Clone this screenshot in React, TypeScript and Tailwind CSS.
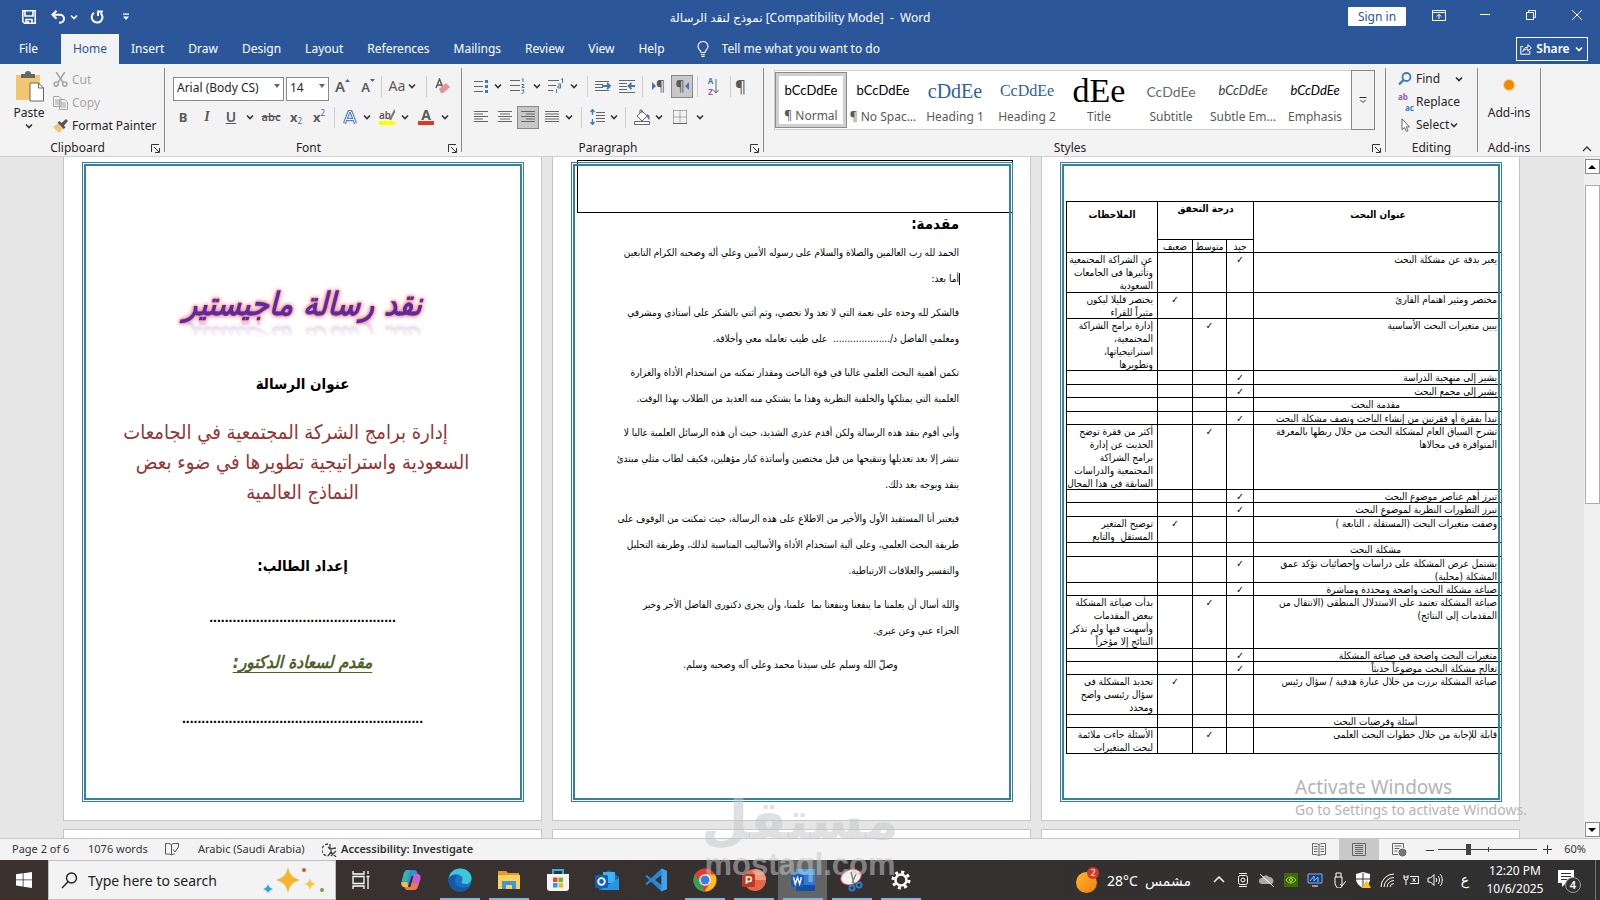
import type { ReactNode } from "react";

const docFont = "font-['DejaVu_Sans_Condensed','DejaVu_Sans',sans-serif]";

function Chevron({ className = "text-[#333]" }: { className?: string }) {
    return (
        <svg viewBox="0 0 10 10" className={`w-[10px] h-[10px] shrink-0 ${className}`} fill="none" stroke="currentColor" strokeWidth="1.6">
            <path d="M2 3.5l3 3 3-3" />
        </svg>
    );
}

function Divider({ className = "mx-[5px]" }: { className?: string }) {
    return <div className={`w-px h-[21px] shrink-0 bg-[#d2d0ce] ${className}`} />;
}

function Tool({ label, className = "w-6", active = false, children }: { label: string; className?: string; active?: boolean; children: ReactNode }) {
    return (
        <button
            aria-label={label}
            className={`h-[23px] shrink-0 flex items-center justify-center text-[#5a5a5a] ${active ? "bg-[#c8c8c8] border border-[#8a8a8a]" : ""} ${className}`}
        >
            {children}
        </button>
    );
}

function Group({ title, className = "", launcher = false, children }: { title: string; className?: string; launcher?: boolean; children: ReactNode }) {
    return (
        <>
            <section className={`flex flex-col ${className}`}>
                <div className="flex-1">{children}</div>
                <div className="h-4 flex items-center px-1">
                    <span className="flex-1 text-center text-xs leading-4">{title}</span>
                    {launcher && (
                        <button aria-label={`${title} settings`} className="w-[9px] h-[9px]">
                            <svg viewBox="0 0 9 9" className="w-[9px] h-[9px]" fill="none" stroke="#333">
                                <path d="M.5 8V.5H8M3 3l5 5M8.5 4v4.500H4" />
                            </svg>
                        </button>
                    )}
                </div>
            </section>
            <div className="w-px my-1 shrink-0 bg-[#8a8a8a]" />
        </>
    );
}

function Lines({ rows }: { rows: [number, number][] }) {
    return (
        <svg viewBox="0 0 14 14" className="w-[14px] h-[14px]" stroke="#666" strokeWidth="1">
            {rows.map(([from, to], i) => (
                <path key={i} d={`M${from} ${i * 2.5 + 1.5}H${to}`} />
            ))}
        </svg>
    );
}

const tabs = ["Insert", "Draw", "Design", "Layout", "References", "Mailings", "Review", "View", "Help"];

function TitleBar() {
    return (
        <header className="bg-[#2b579a] text-white">
            <div className="h-[34px] grid grid-cols-[1fr_auto_1fr] items-center">
                <div className="flex items-center pl-[22px]">
                    <button aria-label="Save">
                        <svg viewBox="0 0 14 14" className="w-[14px] h-[14px]" fill="none" stroke="white" strokeWidth="1.6">
                            <path d="M.8.8h12.400v12.400H2.500L.8 11.500zM3 1v5h8V1M4 13V9.500h6V13" />
                            <path d="M5 11h2v2H5z" fill="white" stroke="none" />
                        </svg>
                    </button>
                    <button aria-label="Undo" className="ml-[15px]">
                        <svg viewBox="0 0 15 14" className="w-[15px] h-[14px]" fill="none" stroke="white" strokeWidth="2">
                            <path d="M5.500.8L1.500 4.800l4 4M2 4.800h7a4 4 0 0 1 0 8H8" />
                        </svg>
                    </button>
                    <Chevron className="ml-[3px] text-white" />
                    <button aria-label="Repeat" className="ml-[11px]">
                        <svg viewBox="0 0 14 14" className="w-[14px] h-[14px]" fill="none" stroke="white" strokeWidth="2">
                            <path d="M4 2.800A5.400 5.400 0 1 0 10.500 3M8 6V1.500h5" />
                        </svg>
                    </button>
                    <button aria-label="Customize Quick Access Toolbar" className="ml-[18px]">
                        <svg viewBox="0 0 8 8" className="w-2 h-2" fill="white">
                            <path d="M1 .5h6v1.200H1zM1 3.500h6L4 7z" />
                        </svg>
                    </button>
                </div>
                <h1 className="text-xs whitespace-pre pt-[2px]">نموذج لنقد الرسالة [Compatibility Mode]  -  Word</h1>
                <div className="flex items-center justify-end pr-[18px] pb-1">
                    <button className="w-[58px] h-[19px] mr-[26px] mt-[3px] bg-white text-[#2b579a] text-xs leading-4 rounded-[1px]">Sign in</button>
                    <button aria-label="Ribbon Display Options" className="mr-[34px]">
                        <svg viewBox="0 0 14 11" className="w-[14px] h-[11px]" fill="none" stroke="white">
                            <path d="M.5.5h13v10H.5zM.5 2.500h13M7 9V4.500M4.800 6.500L7 4.300l2.200 2.200" />
                        </svg>
                    </button>
                    <button aria-label="Minimize" className="mr-9">
                        <svg viewBox="0 0 10 10" className="w-[10px] h-[10px]" stroke="white"><path d="M0 4.500h10" /></svg>
                    </button>
                    <button aria-label="Restore" className="mr-9">
                        <svg viewBox="0 0 10 10" className="w-[10px] h-[10px]" fill="none" stroke="white">
                            <path d="M.5 2.500h7v7h-7zM2.500 2.500v-2h7v7h-2" />
                        </svg>
                    </button>
                    <button aria-label="Close">
                        <svg viewBox="0 0 10 10" className="w-[10px] h-[10px]" stroke="white"><path d="M0 0l10 10M10 0L0 10" /></svg>
                    </button>
                </div>
            </div>
            <nav className="h-[30px] flex items-center text-xs pr-3">
                <button className="w-[61px] pr-1">File</button>
                <button className="w-[58px] h-[30px] bg-[#f3f3f3] text-[#2b579a]">Home</button>
                {tabs.map((tab) => (
                    <button key={tab} className="px-3">{tab}</button>
                ))}
                <svg viewBox="0 0 12 16" className="w-3 h-4 ml-5" fill="none" stroke="white" strokeWidth="1.100">
                    <path d="M4 11.500C4 9 1 8.500 1 5.500a5 5 0 0 1 10 0C11 8.500 8 9 8 11.500zM4 13.500h4M4.500 15.400h3" />
                </svg>
                <input aria-label="Tell me what you want to do" placeholder="Tell me what you want to do" className="ml-[13px] w-48 bg-transparent outline-none placeholder:text-white" />
                <button className="ml-auto w-[72px] h-6 border border-white flex items-center justify-center gap-1 font-semibold">
                    <svg viewBox="0 0 12 12" className="w-3 h-3" fill="none" stroke="white">
                        <path d="M3 3.500H.8v7.700h9V8M3 8.500c.3-3 2-4.300 5-4.300V1.500L11.300 5 8 8.300V6C5.500 6 4 6.500 3 8.500z" />
                    </svg>
                    Share
                    <Chevron className="text-white" />
                </button>
            </nav>
        </header>
    );
}

function ClipboardGroup() {
    return (
        <Group title="Clipboard" className="w-[164px]" launcher>
            <div className="flex pt-1">
                <button className="w-[52px] ml-[3px] flex flex-col items-center text-xs">
                    <svg viewBox="0 0 29 31" className="w-[29px] h-[31px] mt-[3px]">
                        <path d="M1 4h24v25H1z" fill="#f2c671" />
                        <path d="M6 3h4a3 3 0 0 1 6 0h4v4H6z" fill="#666" />
                        <path d="M15 12h8.500l5 5v13H15z" fill="white" stroke="#666" />
                        <path d="M23.500 12v5h5" fill="none" stroke="#666" />
                    </svg>
                    <span className="leading-4 mt-[3px]">Paste</span>
                    <Chevron />
                </button>
                <div className="flex flex-col text-xs text-[#a6a6a6] -ml-[2px]">
                    <button className="h-[23px] flex items-center gap-1">
                        <svg viewBox="0 0 14 14" className="w-[15px] h-[15px]" fill="none" stroke="#a6a6a6" strokeWidth="1.500">
                            <path d="M3 0l6.500 10M11 0L4.500 10" />
                            <circle cx="3" cy="11.300" r="2" />
                            <circle cx="11" cy="11.300" r="2" />
                        </svg>
                        Cut
                    </button>
                    <button className="h-[23px] flex items-center gap-1">
                        <svg viewBox="0 0 15 14" className="w-[15px] h-[14px]" fill="#f3f3f3" stroke="#a6a6a6">
                            <path d="M.5.5H6l2 2v8H.5zM2 4h4M2 6h4M2 8h4M6.500 3.500H12l2.500 2.500v7.500h-8zM8 7h5M8 9h5M8 11h5" />
                        </svg>
                        Copy
                    </button>
                    <button className="h-[23px] flex items-center gap-1 text-[#262626]">
                        <svg viewBox="0 0 15 14" className="w-[15px] h-[14px]">
                            <path d="M0 8l5-4 5 6-4 4z" fill="#f2c671" />
                            <path d="M4.500 3.500l2-1.500 2 2L13 0l2 2-4 4.500 1.500 2L10.500 10z" fill="#555" />
                        </svg>
                        Format Painter
                    </button>
                </div>
            </div>
        </Group>
    );
}

function Combo({ label, value, className }: { label: string; value: string; className: string }) {
    return (
        <div className={`relative h-6 ${className}`}>
            <select aria-label={label} className="appearance-none w-full h-6 pl-[3px] pb-[2px] text-xs bg-white border border-[#8a8a8a] text-[#262626]">
                <option>{value}</option>
            </select>
            <svg viewBox="0 0 6 4" className="absolute right-1 top-[10px] w-[6px] h-1" fill="#666"><path d="M0 0h6L3 4z" /></svg>
        </div>
    );
}

function FontGroup() {
    return (
        <Group title="Font" className="w-[296px]" launcher>
            <div className="flex flex-col gap-[7px] pt-[10px]">
                <div className="h-6 flex items-center pl-2">
                    <Combo label="Font" value="Arial (Body CS)" className="w-[111px]" />
                    <Combo label="Font size" value="14" className="w-[43px] ml-[2px]" />
                    <Tool label="Increase Font Size" className="w-[27px]">
                        <span className="font-semibold text-[15px]">A</span>
                        <svg viewBox="0 0 5 3" className="w-[5px] h-[3px] mb-3" fill="#2b6cb8"><path d="M0 3h5L2.500 0z" /></svg>
                    </Tool>
                    <Tool label="Decrease Font Size">
                        <span className="font-semibold text-[13px] mt-1">A</span>
                        <svg viewBox="0 0 5 3" className="w-[5px] h-[3px] mb-3" fill="#2b6cb8"><path d="M0 0h5L2.500 3z" /></svg>
                    </Tool>
                    <Divider className="ml-px mr-[5px]" />
                    <Tool label="Change Case" className="w-[20px] text-sm">Aa</Tool>
                    <Chevron />
                    <Divider className="ml-[9px] mr-1" />
                    <Tool label="Clear All Formatting">
                        <svg viewBox="0 0 16 16" className="w-4 h-4">
                            <path d="M1 10L4.500 1 8 10M2 7h5" fill="none" stroke="#555" strokeWidth="1.400" />
                            <path d="M4 11l7-6 4 4-7 6H6z" fill="#e8919a" />
                        </svg>
                    </Tool>
                </div>
                <div className="h-6 flex items-center pl-[6px] text-sm">
                    <Tool label="Bold"><b className="text-[13px]">B</b></Tool>
                    <Tool label="Italic"><i className="font-['Liberation_Serif',serif] font-bold">I</i></Tool>
                    <Tool label="Underline"><span className="underline font-semibold">U</span></Tool>
                    <Chevron className="mx-[2px] text-[#333]" />
                    <Tool label="Strikethrough" className="w-7"><s className="text-[11px] font-semibold">abc</s></Tool>
                    <Tool label="Subscript" className="w-[22px]">
                        <b className="text-[13px]">x</b><span className="text-[8px] text-[#2b6cb8] mt-2">2</span>
                    </Tool>
                    <Tool label="Superscript">
                        <b className="text-[13px]">x</b><span className="text-[8px] text-[#2b6cb8] mb-2">2</span>
                    </Tool>
                    <Divider className="mx-[3px]" />
                    <Tool label="Text Effects">
                        <svg viewBox="0 0 14 15" className="w-[14px] h-[15px]" fill="none">
                            <path d="M1.500 13.500L6 1.500h2l4.500 12M3.500 9.500h7" stroke="#a9c4e8" strokeWidth="4" />
                            <path d="M1.500 13.500L6 1.500h2l4.500 12M3.500 9.500h7" stroke="#3e6db5" strokeWidth="2.400" />
                            <path d="M1.500 13.500L6 1.500h2l4.500 12M3.500 9.500h7" stroke="#fff" strokeWidth="1" />
                        </svg>
                    </Tool>
                    <Chevron />
                    <Tool label="Text Highlight Color" className="w-[30px]">
                        <span className="flex flex-col items-center w-4">
                            <span className="flex text-[10px] leading-[12px] font-semibold">
                                ab
                                <svg viewBox="0 0 6 12" className="w-[6px] h-3 -ml-[2px]" stroke="#777" strokeWidth="2"><path d="M6 1L1 11" /></svg>
                            </span>
                            <span className="w-4 h-1 bg-[#ffff00]" />
                        </span>
                    </Tool>
                    <Chevron className="-ml-[2px] mr-[2px] text-[#333]" />
                    <Tool label="Font Color" className="w-[28px]">
                        <span className="flex flex-col items-center w-4">
                            <span className="text-[14px] leading-[12px] font-bold">A</span>
                            <span className="w-4 h-1 bg-[#d83b22]" />
                        </span>
                    </Tool>
                    <Chevron />
                </div>
            </div>
        </Group>
    );
}

const full: [number, number][] = [[0, 14], [0, 14], [0, 14], [0, 14], [0, 14]];

function ParagraphGroup() {
    return (
        <Group title="Paragraph" className="w-[301px]" launcher>
            <div className="flex flex-col gap-[7px] pt-[10px]">
                <div className="h-6 flex items-center pl-[7px]">
                    <Tool label="Bullets">
                        <svg viewBox="0 0 14 15" className="w-[14px] h-[15px]" stroke="#666">
                            <path d="M0 2.500h9M0 7.500h9M0 12.500h9" />
                            <path d="M11 1h3v3h-3zM11 6h3v3h-3zM11 11h3v3h-3z" fill="#3e78bd" stroke="none" />
                        </svg>
                    </Tool>
                    <Chevron />
                    <Tool label="Numbering" className="w-[29px]">
                        <svg viewBox="0 0 15 16" className="w-[15px] h-4" stroke="#666" fill="none">
                            <path d="M0 2.500h10M0 7.500h10M0 12.500h10" />
                            <path d="M12 1.500l1-1V4M11.500 6.500H14L12 9.500h2.500M11.500 12h2.500l-1 1.500c2 0 1 2-1.500 2" stroke="#3e78bd" />
                        </svg>
                    </Tool>
                    <Chevron />
                    <Tool label="Multilevel List" className="w-[27px]">
                        <svg viewBox="0 0 16 16" className="w-4 h-4" stroke="#666" fill="none">
                            <path d="M0 2.500h11M0 7.500h8M0 12.500h5" />
                            <path d="M13 1.500l1.500-1V5M10 6h2.500v4H10V8h2.500M8.500 11v4" stroke="#3e78bd" />
                        </svg>
                    </Tool>
                    <Chevron />
                    <Divider className="ml-[8px] mr-[3px]" />
                    <Tool label="Decrease Indent" className="w-6">
                        <svg viewBox="0 0 16 13" className="w-4 h-[13px]" stroke="#666" fill="none">
                            <path d="M0 1.500h14M0 4.500h8M0 7.500h8M0 10.500h14" />
                            <path d="M7 6h8M12 3l3 3-3 3" stroke="#3e78bd" strokeWidth="1.800" />
                        </svg>
                    </Tool>
                    <Tool label="Increase Indent" className="w-6">
                        <svg viewBox="0 0 16 13" className="w-4 h-[13px]" stroke="#666" fill="none">
                            <path d="M0 .5h16M0 3.500h8M0 6.500h8M0 9.500h8M0 12.500h16" />
                            <path d="M16 6h-6M12.500 3l-3 3 3 3" stroke="#3e78bd" strokeWidth="1.800" />
                        </svg>
                    </Tool>
                    <Divider className="ml-[3px] mr-[3px]" />
                    <Tool label="Left-to-Right" className="w-[25px] text-sm">
                        <svg viewBox="0 0 4 8" className="w-1 h-2" fill="#3e78bd"><path d="M0 0v8l4-4z" /></svg>¶
                    </Tool>
                    <Tool label="Right-to-Left" className="w-[22px] text-sm" active>
                        ¶<svg viewBox="0 0 4 8" className="w-1 h-2" fill="#3e78bd"><path d="M4 0v8L0 4z" /></svg>
                    </Tool>
                    <Divider className="ml-1 mr-1" />
                    <Tool label="Sort" className="w-[23px]">
                        <span className="flex flex-col text-[8px] leading-[11px] font-bold">
                            <span className="text-[#3e78bd]">A</span>
                            <span className="text-[#9a5aa8]">Z</span>
                        </span>
                        <svg viewBox="0 0 6 15" className="w-[6px] h-[15px]" stroke="#666" fill="none"><path d="M3 0v14M.5 11L3 14l2.500-3" /></svg>
                    </Tool>
                    <Divider className="ml-[5px] mr-1" />
                    <Tool label="Show/Hide" className="text-[17px]">¶</Tool>
                </div>
                <div className="h-6 flex items-center pl-[7px]">
                    <Tool label="Align Left"><Lines rows={[[0, 14], [0, 9], [0, 14], [0, 9], [0, 14]]} /></Tool>
                    <Tool label="Center"><Lines rows={[[0, 14], [2, 12], [0, 14], [2, 12], [0, 14]]} /></Tool>
                    <Tool label="Align Right" className="w-[22px]" active><Lines rows={[[0, 14], [5, 14], [0, 14], [5, 14], [0, 14]]} /></Tool>
                    <Tool label="Justify" className="w-[25px]"><Lines rows={full} /></Tool>
                    <Chevron />
                    <Divider className="ml-[7px] mr-[3px]" />
                    <Tool label="Line Spacing" className="w-[24px]">
                        <svg viewBox="0 0 15 16" className="w-[15px] h-4" stroke="#666" fill="none">
                            <path d="M6 3.500h9M6 6.500h9M6 9.500h9M6 12.500h9" />
                            <path d="M2.500 1v5M.5 3l2-2.500 2 2.500M2.500 10v5M.5 13l2 2.500 2-2.500" stroke="#3e78bd" strokeWidth="1.300" />
                        </svg>
                    </Tool>
                    <Chevron />
                    <Divider className="ml-[6px] mr-[4px]" />
                    <Tool label="Shading">
                        <svg viewBox="0 0 17 16" className="w-[17px] h-4" stroke="#666" fill="none">
                            <path d="M3 7l5-5 5 5-5 5zM6 4V1h2v3" fill="white" />
                            <path d="M13 5c3 1 2.500 3 2.500 6-1.500-1-2-2-2.500-4" fill="#3e78bd" stroke="none" />
                            <path d="M.5 12.500h15v3H.5z" fill="white" />
                        </svg>
                    </Tool>
                    <Chevron />
                    <Tool label="Borders" className="w-[31px]">
                        <svg viewBox="0 0 14 14" className="w-[14px] h-[14px]" stroke="#666" fill="none">
                            <path d="M.5.5h13M.5.5v13M13.500.5v13M7 .5v13M.5 7h13" strokeDasharray="1 1" />
                            <path d="M0 13.500h14" />
                        </svg>
                    </Tool>
                    <Chevron />
                </div>
            </div>
        </Group>
    );
}

const styles = [
    { name: "¶ Normal", sample: "bCcDdEe", look: "text-[13px] text-black" },
    { name: "¶ No Spac...", sample: "bCcDdEe", look: "text-[13px] text-black" },
    { name: "Heading 1", sample: "cDdEe", look: "text-[20px] text-[#2f5f9e] font-['Liberation_Serif',serif]" },
    { name: "Heading 2", sample: "CcDdEe", look: "text-[16px] text-[#2f5f9e] font-['Liberation_Serif',serif]" },
    { name: "Title", sample: "dEe", look: "text-[34px] leading-[30px] text-black font-['Liberation_Serif',serif]" },
    { name: "Subtitle", sample: "CcDdEe", look: "text-[14px] text-[#6a6a6a]" },
    { name: "Subtle Em...", sample: "bCcDdEe", look: "text-[13px] text-[#404040] italic" },
    { name: "Emphasis", sample: "bCcDdEe", look: "text-[13px] text-black italic" },
];

function StylesGroup() {
    return (
        <Group title="Styles" className="flex-1 min-w-0" launcher>
            <div className="mt-[6px] ml-[10px] mr-[10px] h-[60px] flex bg-white border border-[#d2d0ce]">
                <div className="flex-1 flex min-w-0 overflow-hidden">
                    {styles.map((s, i) => (
                        <button
                            key={s.name}
                            className={`w-[72px] shrink-0 flex flex-col items-center text-[#5a5a5a] ${i === 0 ? "my-px h-[56px] outline outline-[#8a8a8a] -outline-offset-1 border-4 border-[#d0d0d0]" : "pt-[5px]"}`}
                        >
                            <span className={`h-[30px] w-[54px] flex items-center justify-center font-['Lato',sans-serif] ${s.look}`}>{s.sample}</span>
                            <span className="text-xs leading-4 whitespace-nowrap mt-[3px]">{s.name}</span>
                        </button>
                    ))}
                </div>
                <button aria-label="More styles" className="w-6 -my-px -mr-px border border-[#8a8a8a] bg-[#f3f3f3] flex items-center justify-center">
                    <svg viewBox="0 0 8 8" className="w-2 h-2" fill="none" stroke="#333"><path d="M.5 1.500h7M1.500 4L4 6.500 6.500 4" /></svg>
                </button>
            </div>
        </Group>
    );
}

function Ribbon() {
    return (
        <div className="h-[93px] shrink-0 bg-[#f3f3f3] border-b border-[#d0d0d0] flex text-[#262626]">
            <ClipboardGroup />
            <FontGroup />
            <ParagraphGroup />
            <StylesGroup />
            <Group title="Editing" className="w-[91px]">
                <div className="flex flex-col pt-[3px] pl-3 text-xs">
                    <button className="h-[23px] flex items-center gap-1">
                        <svg viewBox="0 0 14 14" className="w-[14px] h-[14px]" fill="none" stroke="#3e78bd" strokeWidth="1.800">
                            <circle cx="8.500" cy="5" r="4" />
                            <path d="M5.500 8L1 12.500" strokeWidth="2.400" />
                        </svg>
                        Find
                        <Chevron className="ml-[10px]" />
                    </button>
                    <button className="h-[23px] flex items-center gap-[2px]">
                        <span className="w-4 flex flex-col text-[8px] leading-[11px] font-bold">
                            <span className="text-left text-[#9a5aa8]">ab</span>
                            <span className="text-right text-[#3e78bd]">ac</span>
                        </span>
                        Replace
                    </button>
                    <button className="h-[23px] flex items-center gap-1">
                        <svg viewBox="0 0 14 14" className="w-[14px] h-[14px]" fill="white" stroke="#666">
                            <path d="M4 .8v11l2.500-2.300 1.800 4 1.700-.8-1.800-3.800H11.500z" />
                        </svg>
                        <span className="flex items-center">Select<Chevron /></span>
                    </button>
                </div>
            </Group>
            <Group title="Add-ins" className="w-[62px]">
                <button className="w-full pt-[13px] flex flex-col items-center text-xs">
                    <span className="w-[10px] h-[10px] my-[3px] rounded-full bg-[#f08a00] ring-1 ring-[#fbd08c]" />
                    <span className="leading-4 mt-3">Add-ins</span>
                </button>
            </Group>
            <div className="w-[59px] flex items-end justify-center pl-8 pb-[3px]">
                <svg viewBox="0 0 10 8" className="w-[10px] h-2" fill="none" stroke="#333" strokeWidth="1.300"><path d="M1 6l4-4 4 4" /></svg>
            </div>
        </div>
    );
}

// Thin outer rule with a thicker inner one, drawn over the page content
function PageFrame() {
    return (
        <div className="absolute left-[18px] right-[17px] top-[5px] bottom-[18px] border border-[#31849b] p-px pointer-events-none">
            <div className="h-full border-2 border-[#31849b]" />
        </div>
    );
}

function Page({ children }: { children: ReactNode }) {
    return (
        <article dir="rtl" className={`relative w-[479px] h-[664px] shrink-0 bg-white border border-t-0 border-[#c6c6c6] text-black ${docFont}`}>
            {children}
            <PageFrame />
        </article>
    );
}

function CoverPage() {
    return (
        <Page>
            <div className="flex flex-col items-center text-center whitespace-nowrap">
                <h2 className="mt-[124px] text-[32px] leading-[46px] font-bold text-[#5b2ca0] [text-shadow:0_0_2px_#f79a9a,0_0_3px_#f79a9a,0_0_4px_#f79a9a,0_0_5px_#f79a9a] [-webkit-box-reflect:below_-12px_linear-gradient(transparent_50%,rgba(0,0,0,0.3))]">
                    <i>نقد رسالة ماجيستير</i>
                </h2>
                <h3 className="mt-[42px] text-[15px] leading-[30px] font-bold">عنوان الرسالة</h3>
                <p className="mt-[18px] text-[20px] leading-[30px] text-[#943634]">
                    <span className="pr-[34px]">إدارة برامج الشركة المجتمعية في الجامعات</span>
                    <br />
                    السعودية واستراتيجية تطويرها في ضوء بعض
                    <br />
                    النماذج العالمية
                </p>
                <h3 className="mt-[44px] text-[15px] leading-[30px] font-bold">إعداد الطالب:</h3>
                <p className="mt-[21px] text-[14px] leading-[30px] font-bold font-['Liberation_Sans',sans-serif]">................................................</p>
                <h3 className="mt-[15px] text-[17px] leading-[30px] font-bold italic underline underline-offset-4 text-[#4f6228]">مقدم لسعادة الدكتور:</h3>
                <p className="mt-[26px] text-[14px] leading-[30px] font-bold font-['Liberation_Sans',sans-serif]">..............................................................</p>
            </div>
        </Page>
    );
}

const paragraphs = [
    ["الحمد لله رب العالمين والصلاة والسلام على رسوله الأمين وعلي أله وصحبه الكرام التابعين", "أما بعد:"],
    ["فالشكر لله وحده على نعمة التي لا تعد ولا تحصي، وثم أثني بالشكر على أستاذى ومشرفي", "ومعلمي الفاضل د/....................  على طيب تعامله معي وأخلاقه."],
    ["تكمن أهمية البحث العلمي غالبا في قوة الباحث ومقدار تمكنه من استخدام الأداة والغزارة", "العلمية التي يمتلكها والخلفية النظرية وهذا ما يشتكي منه العديد من الطلاب بهذا الوقت."],
    ["وأني أقوم بنقد هذه الرسالة ولكن أقدم عذرى الشديد، حيث أن هذه الرسائل العلمية غالبا لا", "تنشر إلا بعد تعديلها وتنقيحها من قبل مختصين وأساتذة كبار مؤهلين، فكيف لطاب مثلي مبتدئ", "ينقد ويوجه بعد ذلك."],
    ["فيعتبر أنا المستفيد الأول والأخير من الاطلاع على هذه الرسالة، حيث تمكنت من الوقوف على", "طريقة البحث العلمي، وعلى ألية استخدام الأداة والأساليب المناسبة لذلك، وطريقة التحليل", "والتفسير والعلاقات الارتباطية."],
    ["والله أسال أن يعلمنا ما ينفعنا وينفعنا بما  علمنا، وأن يجزى دكتورى الفاضل الأجر وخير", "الجزاء عني وعن غيرى."],
];

function IntroPage() {
    return (
        <Page>
            <div className="mt-[3px] mr-[17px] ml-6 h-[53px] border border-black" />
            <div className="pr-[71px] text-[10px] leading-[26px] whitespace-pre">
                <h2 className="text-[15px] leading-[23px] font-bold mb-1">مقدمة:</h2>
                {paragraphs.map((lines, i) => (
                    <p key={i} className="mb-2">
                        {lines.map((line, j) => (
                            <span key={line} className="block">
                                {i === 0 && j === 1 && <span className="inline-block w-px h-3 -mr-px bg-black align-middle" />}
                                {line}
                            </span>
                        ))}
                    </p>
                ))}
                <p className="text-center pl-[69px]">وصلّ الله وسلم على سيدنا محمد وعلى آله وصحبه وسلم.</p>
            </div>
        </Page>
    );
}

type Grade = "good" | "mid" | "weak";
type Row = { h: number; text: string[]; grade?: Grade; notes?: string[]; center?: boolean };

const rows: Row[] = [
    { h: 40, text: ["يعبر بدقة عن مشكلة البحث"], grade: "good", notes: ["عن الشراكة المجتمعية", "وتأثيرها فى الجامعات", "السعودية"] },
    { h: 26, text: ["مختصر ومثير اهتمام القارئ"], grade: "weak", notes: ["يختصر قليلا ليكون", "مثيراً للقراء"] },
    { h: 52, text: ["يبين متغيرات البحث الأساسية"], grade: "mid", notes: ["إدارة برامج الشراكة", "المجتمعية،", "استراتيجياتها،", "وتطويرها"] },
    { h: 14, text: ["يشير إلى منهجية الدراسة"], grade: "good" },
    { h: 13, text: ["يشير إلى مجمع البحث"], grade: "good" },
    { h: 14, text: ["مقدمة البحث"], center: true },
    { h: 13, text: ["تبدأ بفقرة أو فقرتين من إنشاء الباحث وتصف مشكلة البحث"], grade: "good" },
    { h: 65, text: ["تشرح السياق العام لمشكلة البحث من خلال ربطها بالمعرفة", "المتوافرة فى مجالاها"], grade: "mid", notes: ["أكثر من فقرة توضح", "الحديث عن إدارة", "برامج الشراكة", "المجتمعية والدراسات", "السابقة في هذا المجال"] },
    { h: 13, text: ["تبرز أهم عناصر موضوع البحث"], grade: "good" },
    { h: 14, text: ["تبرز التطورات النظرية لموضوع البحث"], grade: "good" },
    { h: 26, text: ["وصفت متغيرات البحث (المستقلة ، التابعة )"], grade: "weak", notes: ["توضيح المتغير", "المستقل  والتابع"] },
    { h: 14, text: ["مشكلة البحث"], center: true },
    { h: 26, text: ["يشتمل عرض المشكلة على دراسات وإحصائيات تؤكد عمق", "المشكلة (محلية)"], grade: "good" },
    { h: 13, text: ["صياغة مشكلة البحث واضحة ومحددة ومباشرة"], grade: "good" },
    { h: 53, text: ["صياغة المشكلة تعتمد على الاستدلال المنطقى (الانتقال من", "المقدمات إلى النتائج)"], grade: "mid", notes: ["بدأت صياغة المشكلة", "ببعض المقدمات", "وأسهبت فيها ولم تذكر", "النتائج إلا مؤخراً"] },
    { h: 13, text: ["متغيرات البحث واضحة فى صياغة المشكلة"], grade: "good" },
    { h: 13, text: ["تعالج مشكلة البحث موضوعاً حديثاً"], grade: "good" },
    { h: 40, text: ["صياغة المشكلة برزت من خلال عبارة هدفية / سؤال رئيس"], grade: "weak", notes: ["تحديد المشكلة فى", "سؤال رئيسى واضح", "ومحدد"] },
    { h: 13, text: ["أسئلة وفرضيات البحث"], center: true },
    { h: 26, text: ["قابلة للإجابة من خلال خطوات البحث العلمى"], grade: "mid", notes: ["الأسئلة جاءت ملائمة", "لبحث المتغيرات"] },
];

const cell = "p-0 align-top font-normal border-l border-black shadow-[inset_0_-1px_0_#000]";

function TablePage() {
    return (
        <Page>
            <table className="mt-[44px] mr-[17px] w-[436px] table-fixed border-separate border-spacing-0 border-t border-black text-[10px] leading-[13px] whitespace-pre">
                <colgroup>
                    <col className="w-[249px]" />
                    <col className="w-[27px]" />
                    <col className="w-[34px]" />
                    <col className="w-[35px]" />
                    <col className="w-[91px]" />
                </colgroup>
                <thead>
                    <tr className="h-[38px]">
                        <th rowSpan={2} className={cell}><b className="block pt-[6px]">عنوان البحث</b></th>
                        <th colSpan={3} className={cell}><b className="block">درجة التحقق</b></th>
                        <th rowSpan={2} className={cell}><b className="block pt-[6px]">الملاحظات</b></th>
                    </tr>
                    <tr className="h-[13px]">
                        <th className={cell}>جيد</th>
                        <th className={cell}>متوسط</th>
                        <th className={cell}>ضعيف</th>
                    </tr>
                </thead>
                <tbody>
                    {rows.map((row) => (
                        <tr key={row.text[0]} style={{ height: row.h }}>
                            <td className={`${cell} pr-[5px] ${row.center ? "text-center" : ""}`}>{row.text.join("\n")}</td>
                            <td className={`${cell} text-center`}>{row.grade === "good" && "✓"}</td>
                            <td className={`${cell} text-center`}>{row.grade === "mid" && "✓"}</td>
                            <td className={`${cell} text-center`}>{row.grade === "weak" && "✓"}</td>
                            <td className={`${cell} pr-1`}>{row.notes?.join("\n")}</td>
                        </tr>
                    ))}
                </tbody>
            </table>
        </Page>
    );
}

function Document() {
    return (
        <main className="relative flex-1 min-h-0 flex bg-[#e6e6e6] overflow-hidden">
            <div className="flex-1 min-w-0 flex flex-col gap-2 overflow-hidden">
                <div className="flex justify-center gap-[10px]">
                    <CoverPage />
                    <IntroPage />
                    <TablePage />
                </div>
                <div className="flex justify-center gap-[10px]">
                    <div className="w-[479px] h-[664px] shrink-0 bg-white border border-[#c6c6c6]" />
                    <div className="w-[479px] h-[664px] shrink-0 bg-white border border-[#c6c6c6]" />
                    <div className="w-[479px] h-[664px] shrink-0 bg-white border border-[#c6c6c6]" />
                </div>
            </div>
            <div className="w-[17px] pt-[2px] pb-px px-px flex flex-col items-center bg-[#f0f0f0] border-l border-[#e6e6e6]">
                <button aria-label="Scroll up" className="w-[15px] h-[15px] shrink-0 bg-white border border-[#8a8a8a] flex items-center justify-center">
                    <svg viewBox="0 0 8 4" className="w-2 h-1"><path d="M0 4h8L4 0z" /></svg>
                </button>
                <div className="mt-[11px] w-[15px] h-[319px] shrink-0 bg-white border border-[#ababab]" />
                <button aria-label="Scroll down" className="mt-auto w-[15px] h-[15px] shrink-0 bg-white border border-[#8a8a8a] flex items-center justify-center">
                    <svg viewBox="0 0 8 4" className="w-2 h-1"><path d="M0 0h8L4 4z" /></svg>
                </button>
            </div>
            <div className="absolute right-[69px] bottom-[18px] w-[236px] text-[#b4b4b4] whitespace-nowrap">
                <p className="text-[19px] leading-[26px]">Activate Windows</p>
                <p className="text-[14px] leading-[20px]">Go to Settings to activate Windows.</p>
            </div>
        </main>
    );
}

function StatusBar() {
    return (
        <footer className="h-[22px] shrink-0 flex items-center bg-[#f3f3f3] border-t border-[#c6c6c6] text-[11px] text-[#333] whitespace-nowrap">
            <span className="ml-3 w-[76px]">Page 2 of 6</span>
            <span className="w-[77px]">1076 words</span>
            <svg viewBox="0 0 14 13" className="w-[14px] h-[13px]" fill="none" stroke="#555">
                <path d="M6.500 12V1.500C5 .5 3 .5.500.5v10.500c2.500 0 4.500 0 6 1C8 11 9 11 10 11M6.500 1.500c1-1 3-1 7-1V4M8 6.500l2 2.500 3.500-5" />
            </svg>
            <span className="ml-[19px] w-[124px]">Arabic (Saudi Arabia)</span>
            <svg viewBox="0 0 16 14" className="w-4 h-[14px]" fill="none" stroke="#444" strokeWidth="1.300">
                <path d="M6 1A6 6 0 0 0 6 13" strokeDasharray="3 1.500" />
                <path d="M8 1v4M6 4l2 2 6-1M9 6v3l-3 4M9 9l5 5M14 8l-5 5" />
            </svg>
            <span className="ml-[3px] font-semibold">Accessibility: Investigate</span>
            <div className="ml-auto flex items-center pr-[14px]">
                <svg viewBox="0 0 14 13" className="w-[14px] h-[13px] mr-[13px]" fill="none" stroke="#666">
                    <path d="M7 1.500v11M7 1.500C5 .5 3 .5.500.5v11c2.500 0 4.500 0 6.500 1 2-1 4-1 6.500-1V.5C11 .5 9 .5 7 1.500M2 3.500h3.500M2 6h3.500M2 8.500h3.500M8.500 3.500H12M8.500 6H12M8.500 8.500H12" />
                </svg>
                <span className="w-10 h-[21px] bg-[#c8c8c8] flex items-center justify-center">
                    <svg viewBox="0 0 14 13" className="w-[14px] h-[13px]" fill="none" stroke="#666"><path d="M.5.5h13v12H.5zM3 2.500h8M3 4.500h8M3 6.500h8M3 8.500h8M3 10.500h8" /></svg>
                </span>
                <svg viewBox="0 0 15 14" className="w-[15px] h-[14px] ml-[13px]" fill="none" stroke="#666">
                    <path d="M6 11.500H.5V.5h11V5M2.500 3h7M2.500 5.500h5M2.500 8h3" />
                    <circle cx="10.500" cy="9.500" r="3.500" fill="#777" />
                </svg>
                <button aria-label="Zoom out" className="ml-[19px]"><svg viewBox="0 0 8 8" className="w-2 h-2" stroke="#333"><path d="M0 4.500h8" /></svg></button>
                <div className="relative ml-1 w-[99px] h-[13px] flex items-center">
                    <span className="absolute left-[50px] top-[4px] w-px h-[5px] bg-[#444]" />
                    <input
                        type="range"
                        aria-label="Zoom"
                        defaultValue={29}
                        className="appearance-none w-full h-px bg-[#444] [&::-webkit-slider-thumb]:appearance-none [&::-webkit-slider-thumb]:w-[5px] [&::-webkit-slider-thumb]:h-[11px] [&::-webkit-slider-thumb]:bg-[#444]"
                    />
                </div>
                <button aria-label="Zoom in" className="ml-[6px]"><svg viewBox="0 0 9 9" className="w-[9px] h-[9px]" stroke="#333"><path d="M0 4.500h9M4.500 0v9" /></svg></button>
                <span className="ml-3">60%</span>
            </div>
        </footer>
    );
}

function TaskIcon({ label, className = "", running = false, children }: { label: string; className?: string; running?: boolean; children: ReactNode }) {
    return (
        <button aria-label={label} className={`w-[49px] h-full shrink-0 flex flex-col items-center ${className}`}>
            <svg viewBox="0 0 24 24" className="w-6 h-6 mt-2">{children}</svg>
            <span className={`mt-auto h-[2px] w-10 ${running ? "bg-[#76b9ed]" : ""}`} />
        </button>
    );
}

function TrayIcon({ className = "w-6", children }: { className?: string; children: ReactNode }) {
    return (
        <span className={`shrink-0 flex justify-center ${className}`}>
            <svg viewBox="0 0 16 16" className="w-4 h-4" fill="none" stroke="white">{children}</svg>
        </span>
    );
}

function Taskbar() {
    return (
        <div className="h-10 shrink-0 flex items-center bg-linear-to-r from-[#3b322f] to-[#303030] text-white">
            <button aria-label="Start" className="w-12 h-full flex items-center justify-center">
                <svg viewBox="0 0 16 16" className="w-4 h-4" fill="white"><path d="M0 2.300L6.700 1.300v6.200H0zM7.500 1.200L16 0v7.500H7.500zM0 8.300h6.700v6.200L0 13.600zM7.500 8.300H16V16l-8.500-1.200z" /></svg>
            </button>
            <label className="w-[288px] h-full flex items-center bg-[#f3f3f3] border border-[#c0c0c0] pl-3 pr-[10px]">
                <svg viewBox="0 0 17 17" className="w-[17px] h-[17px]" fill="none" stroke="#222" strokeWidth="1.400">
                    <circle cx="10.500" cy="6" r="5" />
                    <path d="M7 9.700L1 16" />
                </svg>
                <input aria-label="Search" placeholder="Type here to search" className="ml-[10px] w-[150px] text-[14px] bg-transparent outline-none placeholder:text-[#222]" />
                <svg viewBox="0 0 62 26" className="w-[62px] h-[26px] ml-auto">
                    <path d="M25 0c2 8 4 10.500 12 13-8 2.500-10 5-12 13-2-8-4-10.500-12-13 8-2.500 10-5 12-13z" fill="#f7b52c" />
                    <path d="M47 11c1 4 2 5 6 6-4 1-5 2-6 6-1-4-2-5-6-6 4-1 5-2 6-6z" fill="#f9c440" />
                    <path d="M5 17c1 3 2 4 5 5-3 1-4 2-5 4-1-2-2-3-5-4 3-1 4-2 5-5z" fill="#2ea3e6" />
                    <circle cx="41" cy="3" r="2" fill="#d9552b" />
                    <circle cx="59" cy="23" r="2" fill="#6aa83a" />
                </svg>
            </label>
            <TaskIcon label="Task View">
                <path d="M4 3v3h11V3M4 21v-3h11v3M4 8.500h11v7H4zM19 3v3M19 9v12M17.500 8.500h3" fill="none" stroke="white" strokeWidth="1.300" />
            </TaskIcon>
            <TaskIcon label="Copilot" className="ml-px">
                <path d="M9 2h6c2 0 3 1 3.500 3l1 3h-7L9 19H6c-3 0-4-2-3.500-5L5 5c.6-2 2-3 4-3z" fill="#2f8fe0" />
                <path d="M5 5c.6-2 2-3 4-3h2L8 13H2.700z" fill="#36b5a0" />
                <path d="M2.500 14h6L9 19H6c-3 0-4-2-3.500-5z" fill="#f0c13a" />
                <path d="M15 22H9c-2 0-3-1-3.500-3h6L15 6h3c3 0 4 2 3.500 5L19 19c-.6 2-2 3-4 3z" fill="#c65fc8" />
                <path d="M9 22c-2 0-3-1-3.500-3h6l1.200-4H19l-1 5c-1 1.500-2 2-3 2z" fill="#f0784a" />
            </TaskIcon>
            <TaskIcon label="Edge" running>
                <circle cx="12" cy="12" r="11.500" fill="#1b72c4" />
                <path d="M.7 11C1.500 4 6.500.5 12 .5 19 .5 23.500 5 23.500 10c0 4-3 6-6 6-2.500 0-4-1-4-2 0-.7 1-1 1-3 0-2.500-2.500-4.500-6-4.500C4.500 6.500 2 8.500.7 11z" fill="#3dc6d8" />
                <path d="M7 13c0-3 1-5 3-6-6-1.500-9 2-9.400 5C1 19 6 23.500 12 23.500c4 0 7-2 9-5C15 21 7 19 7 13z" fill="#1558a8" />
            </TaskIcon>
            <TaskIcon label="File Explorer" running>
                <path d="M1 3h8l2 2h11v5H1z" fill="#e8992a" />
                <path d="M1 7h22v14H1z" fill="#fbd35c" />
                <path d="M5 21v-8h14v8h-4v-4H9v4z" fill="#3f96dd" />
            </TaskIcon>
            <TaskIcon label="Microsoft Store">
                <path d="M7 6V2h10v4" fill="none" stroke="#33b1e8" strokeWidth="2" />
                <path d="M1 6h22v14a3 3 0 0 1-3 3H4a3 3 0 0 1-3-3z" fill="#f4f4f4" />
                <path d="M7 9.500h4.500V14H7z" fill="#e2492b" /><path d="M12.500 9.500H17V14h-4.500z" fill="#72b52c" />
                <path d="M7 15h4.500v4.500H7z" fill="#2a9fe0" /><path d="M12.500 15H17v4.500h-4.500z" fill="#f7b81d" />
            </TaskIcon>
            <TaskIcon label="Outlook">
                <path d="M4 9l10-7 10 7v13H4z" fill="#1568bd" /><path d="M8 4h12v11H8z" fill="#3db3f0" /><path d="M5 22l19-12v12z" fill="#2a94e0" />
                <rect x="0" y="7" width="13" height="13" rx="1.500" fill="#0f61b8" />
                <circle cx="6.500" cy="13.500" r="3.300" fill="none" stroke="white" strokeWidth="1.800" />
            </TaskIcon>
            <TaskIcon label="Visual Studio Code">
                <path d="M17.500.5L23 3v18l-5.500 2.500L7 13.500 3 17l-2-1 4.500-4L1 8l2-1 4 3.500zM17.500 7L11 12l6.500 5z" fill="#2489d8" fillRule="evenodd" />
                <path d="M17.500.5L23 3v18l-5.500 2.500z" fill="#3ea2ee" />
            </TaskIcon>
            <TaskIcon label="Chrome" running>
                <circle cx="12" cy="12" r="11.500" fill="#e33b2e" />
                <path d="M2 6.200L7.500 15l4 8.500C5 23.500.5 18 .5 12c0-2 .5-4 1.500-5.800z" fill="#2da44e" />
                <path d="M12 6.500h10a11.500 11.500 0 0 1-10.500 17L17 14.700z" fill="#fbc116" />
                <circle cx="12" cy="12" r="5.800" fill="white" /><circle cx="12" cy="12" r="4.500" fill="#3b7de8" />
            </TaskIcon>
            <TaskIcon label="PowerPoint" running>
                <circle cx="13" cy="12" r="11" fill="#e8674a" /><path d="M13 1a11 11 0 0 1 11 11H13z" fill="#f39a7d" />
                <rect x="0" y="6" width="13" height="13" rx="1.500" fill="#c3381d" />
                <path d="M4.500 16V9h2.700a2 2 0 0 1 0 4.500H4.500" fill="none" stroke="white" strokeWidth="1.600" />
            </TaskIcon>
            <TaskIcon label="Word" className="bg-[#646464]" running>
                <rect x="5" y="1" width="19" height="22" rx="1.500" fill="#2b7cd3" /><path d="M5 1h19v6H5z" fill="#47a5ee" /><path d="M5 17h19v6H5z" fill="#134fa3" />
                <rect x="0" y="6" width="13" height="13" rx="1.500" fill="#185abd" />
                <path d="M2.500 9l1.800 7 2.200-6.500L8.700 16l1.800-7" fill="none" stroke="white" strokeWidth="1.400" />
            </TaskIcon>
            <TaskIcon label="Snipping Tool" running>
                <ellipse cx="11" cy="9" rx="10.500" ry="7.500" fill="#f2f2f2" stroke="#d94a4a" transform="rotate(-20 11 9)" />
                <path d="M11 4l3 12M16 6l-4 9" stroke="#888" strokeWidth="1.500" />
                <circle cx="12" cy="20" r="2.500" fill="none" stroke="#2a7fd0" strokeWidth="2" /><circle cx="19" cy="17" r="2.500" fill="none" stroke="#2a7fd0" strokeWidth="2" />
            </TaskIcon>
            <TaskIcon label="Settings" running>
                <circle cx="12" cy="12" r="5.500" fill="none" stroke="white" strokeWidth="2.500" />
                <circle cx="12" cy="12" r="8" fill="none" stroke="white" strokeWidth="3" strokeDasharray="3 3.283" />
            </TaskIcon>
            <div className="ml-auto flex items-center">
                <span className="relative w-[22px] h-[26px] flex items-end">
                    <span className="w-[21px] h-[21px] rounded-full bg-linear-to-br from-[#fbb829] to-[#f07c12]" />
                    <span className="absolute -right-px top-0 w-3 h-3 rounded-full bg-[#d13a26] text-[9px] leading-3 text-center">2</span>
                </span>
                <span className="ml-[9px] w-[38px] text-[14px]">28°C</span>
                <span className="w-[62px] text-[14px]">مشمس</span>
                <TrayIcon><path d="M3 10l5-5 5 5" strokeWidth="1.500" /></TrayIcon>
                <TrayIcon><rect x="3.500" y="3.500" width="9" height="9" rx="2" /><circle cx="8" cy="8" r="2" /><path d="M4 1.500h8M4 14.500h8" /></TrayIcon>
                <TrayIcon><path d="M3 12a3 3 0 0 1 0-6 4 4 0 0 1 7-1 4 4 0 0 1 3 7z" fill="#aaa" stroke="none" /><path d="M1 2l14 13" /></TrayIcon>
                <TrayIcon><path d="M1 1h14v14H1z" fill="#3c6b08" stroke="none" /><path d="M3 8c3-4 7-4 10 0-3 4-7 4-10 0z" stroke="#a6d94c" /><circle cx="8" cy="8" r="1.500" stroke="#a6d94c" /></TrayIcon>
                <TrayIcon><path d="M1 2h14v9H1z" fill="#143c86" stroke="#9ab" /><path d="M3 9l4-5v5l4-4v5" stroke="#7cc4ff" /><path d="M5 14h6" /></TrayIcon>
                <TrayIcon><path d="M5 5V1h5v4M4 5h7v7a3 3 0 0 1-6 2l-1-2zM9 12l2 2 4-5" /></TrayIcon>
                <TrayIcon><path d="M8 0l7 2v5c0 4-3 7-7 9-4-2-7-5-7-9V2z" fill="white" stroke="none" /><path d="M8 1v14M1 7h14" stroke="#333" /><path d="M11.500 8l4.500 8H7z" fill="#f7c325" stroke="none" /></TrayIcon>
                <TrayIcon><path d="M2 15A13 13 0 0 1 15 2M5 15A10 10 0 0 1 15 5.500M8 15a7 7 0 0 1 7-6.500M11 15a4 4 0 0 1 4-3.500" /></TrayIcon>
                <TrayIcon><path d="M7 4.500h8.500v7H7M9.500 6l3 4M12.500 6l-3 4M1 3v3a2 2 0 0 0 4 0V3M1 5h4M3 8v5" /></TrayIcon>
                <TrayIcon><path d="M1 6h2.500L7 2.500v11L3.500 10H1zM9 6c1 1 1 3 0 4M11 4c2 2 2 6 0 8M13 2c3 3 3 9 0 12" /></TrayIcon>
                <span className="w-9 text-center text-sm">ع</span>
                <span className="w-[64px] text-center text-xs leading-[18px]">
                    12:20 PM
                    <br />
                    10/6/2025
                </span>
                <button aria-label="Notifications" className="relative ml-[9px] mr-[15px] w-6 h-6">
                    <svg viewBox="0 0 24 24" className="w-6 h-6">
                        <path d="M2 2h16v13h-8l-4 4v-4H2z" fill="white" />
                        <path d="M5 5.500h10M5 8.500h10M5 11.500h6" stroke="#333" />
                    </svg>
                    <span className="absolute left-[9px] top-[9px] w-4 h-4 rounded-full border border-[#999] bg-[#333] text-[11px] leading-[14px] font-semibold">4</span>
                </button>
                <span className="w-px h-10 bg-[#777] mr-1" />
            </div>
        </div>
    );
}

export default function App() {
    return (
        <div className="relative h-screen flex flex-col overflow-hidden font-['Noto_Sans','DejaVu_Sans',sans-serif]">
            <TitleBar />
            <Ribbon />
            <Document />
            <StatusBar />
            <Taskbar />
            <div aria-hidden="true" className="absolute left-1/2 bottom-[18px] -translate-x-1/2 text-center text-[#c4c6ca]/55 font-bold whitespace-nowrap pointer-events-none">
                <p className="text-[54px] leading-[54px] font-['DejaVu_Sans',sans-serif]">مستقل</p>
                <p className="text-[31px] leading-[34px] font-['Liberation_Sans',sans-serif]">mostaql.com</p>
            </div>
        </div>
    );
}
